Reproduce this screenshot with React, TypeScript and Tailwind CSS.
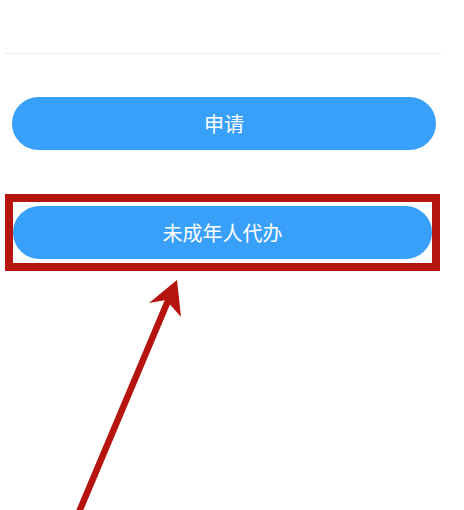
import React from "react";

const font = {fontFamily: '"Noto Sans CJK SC", "Noto Sans", sans-serif'};

const ApplyButton: React.FC<{label: string}> = ({label}) => (
    <button className="flex h-[53px] w-full items-center justify-center rounded-full bg-[#39a0f9] text-[20px] leading-none text-white">
        {label}
    </button>
);

const App: React.FC = () => {
    return (
        <div className="relative h-[510px] w-[464px] overflow-hidden bg-white" style={font}>
            <div className="h-[53px]"/>
            <div className="ml-[5px] mr-[22px] h-px bg-[#ececec]"/>

            <div className="ml-[12px] mr-[28px] mt-[43px]">
                <ApplyButton label="申请"/>
            </div>

            {/* highlighted one */}
            <div className="ml-[5px] mt-[44px] w-[435px] border-[8px] border-[#b5140f] py-[4px]">
                <ApplyButton label="未成年人代办"/>
            </div>

            {/* annotation arrow */}
            <svg className="pointer-events-none absolute left-0 top-0" width="464" height="510" viewBox="0 0 464 510">
                <line x1="170" y1="296" x2="79" y2="512" stroke="#b5140f" strokeWidth="6.5"/>
                <polygon points="177,280 149,303 166,300 181,317" fill="#b5140f"/>
            </svg>
        </div>
    );
}

export default App;
